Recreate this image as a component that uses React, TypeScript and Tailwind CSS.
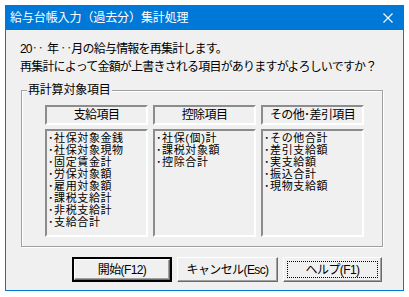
import React from "react";

const font = {
  fontFamily: '"Liberation Sans", "Noto Sans CJK JP", "Noto Sans", sans-serif',
};

const columns = [
  {
    title: "支給項目",
    items: [
      "社保対象金銭",
      "社保対象現物",
      "固定賃金計",
      "労保対象額",
      "雇用対象額",
      "課税支給計",
      "非税支給計",
      "支給合計",
    ],
  },
  { title: "控除項目", items: ["社保(個)計", "課税対象額", "控除合計"] },
  {
    title: "その他･差引項目",
    items: ["その他合計", "差引支給額", "実支給額", "振込合計", "現物支給額"],
  },
];

const Column = ({ title, items }: { title: string; items: string[] }) => (
  <div className="flex flex-col w-[103px] gap-[4px]">
    <div className="h-[20px] border-2 border-t-[#8c8c8c] border-l-[#8c8c8c] border-b-white border-r-white flex items-center justify-center text-[12px] leading-[12px] tracking-[-0.6px] text-black">
      {title}
    </div>
    <div className="h-[108px] border-2 border-t-[#8c8c8c] border-l-[#8c8c8c] border-b-white border-r-white pt-[1px] pl-[1px] text-[11px] leading-[12px] tracking-[0.6px] text-black">
      {items.map((it) => (
        <div key={it} className="h-[12px] whitespace-nowrap">
          {"･" + it}
        </div>
      ))}
    </div>
  </div>
);

const Button = ({
  label,
  width,
  isDefault,
  focused,
}: {
  label: string;
  width: string;
  isDefault?: boolean;
  focused?: boolean;
}) => (
  <div
    className={`${width} h-[25px] ${
      isDefault ? "border-2 border-black" : ""
    } bg-[#f0f0f0]`}
  >
    <div className="relative w-full h-full border border-t-white border-l-white border-b-[#6a6a6a] border-r-[#6a6a6a] shadow-[inset_-1px_-1px_0_#a0a0a0] flex items-center justify-center text-[12px] leading-[12px] tracking-[-0.6px] text-black">
      {focused && (
        <div className="absolute inset-[3px] border border-dotted border-black" />
      )}
      <span className="relative">{label}</span>
    </div>
  </div>
);

export default function App() {
  return (
    <div className="w-[409px] h-[297px] bg-white pt-[5px] pl-[5px]" style={font}>
      <div className="w-[399px] h-[286px] border border-[#0078d7] bg-[#f0f0f0] flex flex-col">
        {/* title bar */}
        <div className="h-[25px] -mt-[1px] bg-[#0078d7] flex items-center justify-between pl-[4px] pr-[10px] text-white">
          <span className="text-[12px] tracking-[-0.1px] leading-[12px]">
            給与台帳入力（過去分）集計処理
          </span>
          <svg width="10" height="10" viewBox="0 0 10 10">
            <path d="M0.5 0.5 L9.5 9.5 M9.5 0.5 L0.5 9.5" stroke="#fff" strokeWidth="1.1" />
          </svg>
        </div>

        <div className="pl-[14px] pt-[10px] text-black text-[12px] leading-[18px] tracking-[-0.8px]">
          <p className="whitespace-nowrap">
            20<span className="text-[#4a2800]">‥</span>
            <span className="inline-block w-[4px]" />年
            <span className="inline-block w-[2px]" />
            <span className="text-[#4a2800]">‥</span>月の給与情報を再集計します。
          </p>
          <p className="whitespace-nowrap">
            再集計によって金額が上書きされる項目がありますがよろしいですか？
          </p>

          <div className="relative mt-[14px] ml-[1px] w-[362px] h-[157px] border border-[#a0a0a0] shadow-[inset_1px_1px_0_#fff,1px_1px_0_#fff] pt-[14px] pl-[23px] tracking-normal">
            <span className="absolute -top-[7px] left-[5px] px-[1px] bg-[#f0f0f0] text-[12px] leading-[12px] tracking-[-0.2px]">
              再計算対象項目
            </span>
            <div className="flex gap-[5px]">
              {columns.map((c) => (
                <Column key={c.title} title={c.title} items={c.items} />
              ))}
            </div>
          </div>

          <div className="flex gap-[5px] mt-[10px] ml-[52px] tracking-normal">
            <Button label="開始(F12)" width="w-[100px]" isDefault />
            <Button label="キャンセル(Esc)" width="w-[101px]" />
            <Button label="ヘルプ(F1)" width="w-[99px]" focused />
          </div>
        </div>
      </div>
    </div>
  );
}
